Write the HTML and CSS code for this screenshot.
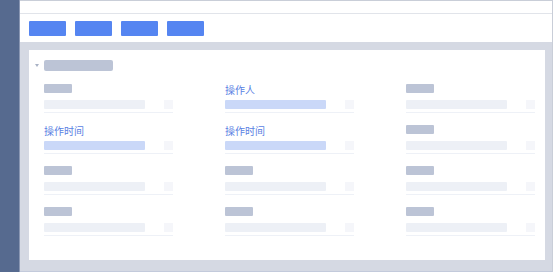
FILE: index.html
```html
<!DOCTYPE html>
<html lang="zh-CN">
<head>
    <meta charset="UTF-8">
    <meta name="viewport" content="width=device-width, initial-scale=1.0">
    <title>查询表单</title>
    <link rel="stylesheet" href="styles.css">
</head>
<body>

    <div class="frame">
        <div class="sidebar"></div>

        <div class="main">
            <div class="topbar"></div>

            <div class="toolbar">
                <div class="btn"></div>
                <div class="btn"></div>
                <div class="btn"></div>
                <div class="btn"></div>
            </div>

            <div class="content">
                <div class="card">
                    <div class="card-title">
                        <span class="caret"></span>
                        <span class="title-bar"></span>
                    </div>

                    <div class="fields">
                        <div class="field">
                            <div class="label-box"></div>
                            <div class="input"><span class="bar"></span><span class="square"></span></div>
                        </div>
                        <div class="field">
                            <div class="label-text">操作人</div>
                            <div class="input"><span class="bar active"></span><span class="square"></span></div>
                        </div>
                        <div class="field">
                            <div class="label-box"></div>
                            <div class="input"><span class="bar"></span><span class="square"></span></div>
                        </div>

                        <div class="field">
                            <div class="label-text">操作时间</div>
                            <div class="input"><span class="bar active"></span><span class="square"></span></div>
                        </div>
                        <div class="field">
                            <div class="label-text">操作时间</div>
                            <div class="input"><span class="bar active"></span><span class="square"></span></div>
                        </div>
                        <div class="field">
                            <div class="label-box"></div>
                            <div class="input"><span class="bar"></span><span class="square"></span></div>
                        </div>

                        <div class="field">
                            <div class="label-box"></div>
                            <div class="input"><span class="bar"></span><span class="square"></span></div>
                        </div>
                        <div class="field">
                            <div class="label-box"></div>
                            <div class="input"><span class="bar"></span><span class="square"></span></div>
                        </div>
                        <div class="field">
                            <div class="label-box"></div>
                            <div class="input"><span class="bar"></span><span class="square"></span></div>
                        </div>

                        <div class="field">
                            <div class="label-box"></div>
                            <div class="input"><span class="bar"></span><span class="square"></span></div>
                        </div>
                        <div class="field">
                            <div class="label-box"></div>
                            <div class="input"><span class="bar"></span><span class="square"></span></div>
                        </div>
                        <div class="field">
                            <div class="label-box"></div>
                            <div class="input"><span class="bar"></span><span class="square"></span></div>
                        </div>
                    </div>
                </div>
            </div>
        </div>
    </div>

</body>
</html>
```

FILE: styles.css
```css
body {
    margin: 0;
    padding: 0;
    font-family: "Noto Sans CJK SC", "Noto Sans", sans-serif;
    background-color: #d5d9e3;
}

.frame {
    display: flex;
    width: 553px;
    height: 272px;
    overflow: hidden;
}

.sidebar {
    width: 19px;
    flex-shrink: 0;
    background-color: #566a8f;
    border-right: 1px solid #8a97b3;
}

.main {
    flex: 1;
    display: flex;
    flex-direction: column;
    border-top: 1px solid #c9ced8;
    border-right: 1px solid #c9ced8;
    border-bottom: 1px solid #c3cadb;
    background-color: #d5d9e3;
}

.topbar {
    height: 12px;
    background-color: #ffffff;
    border-bottom: 1px solid #e1e4ea;
}

.toolbar {
    display: flex;
    gap: 9px;
    height: 15px;
    padding: 7px 9px 6px;
    background-color: #ffffff;
}

.btn {
    width: 37px;
    height: 15px;
    background-color: #5585f1;
    border-radius: 1px;
}

.content {
    flex: 1;
    padding: 8px 7px 11px 9px;
}

.card {
    height: 100%;
    box-sizing: border-box;
    padding: 10px 6px 0;
    background-color: #ffffff;
}

.card-title {
    display: flex;
    align-items: center;
    gap: 5px;
    margin-bottom: 13px;
}

.caret {
    width: 0;
    height: 0;
    border-left: 2px solid transparent;
    border-right: 2px solid transparent;
    border-top: 3px solid #a9b2c5;
}

.title-bar {
    width: 69px;
    height: 11px;
    background-color: #bcc4d6;
    border-radius: 2px;
}

.fields {
    display: grid;
    grid-template-columns: repeat(3, 129px);
    column-gap: 52px;
    row-gap: 12px;
    padding-left: 9px;
}

.field {
    display: flex;
    flex-direction: column;
}

.label-box {
    width: 28px;
    height: 9px;
    background-color: #bcc4d6;
    border-radius: 1px;
}

.label-text {
    height: 9px;
    line-height: 9px;
    margin-top: 1px;
    margin-bottom: -1px;
    font-size: 10px;
    color: #5a7fe3;
    white-space: nowrap;
}

.input {
    display: flex;
    height: 9px;
    margin-top: 7px;
    padding-bottom: 3px;
    border-bottom: 1px solid #eef1f7;
}

.bar {
    width: 101px;
    height: 9px;
    background-color: #edf0f6;
    border-radius: 1px;
}

.bar.active {
    background-color: #cad8f8;
}

.square {
    width: 9px;
    height: 9px;
    margin-left: 19px;
    background-color: #f5f6fa;
}
```
